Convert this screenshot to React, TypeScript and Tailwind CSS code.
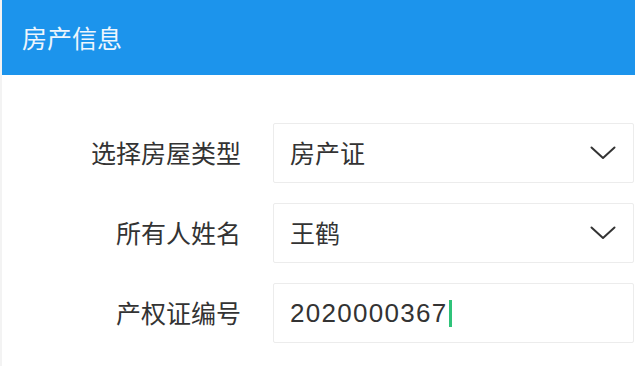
import React from "react";

const Chevron = () => (
  <svg width="26" height="14" viewBox="0 0 26 14" fill="none">
    <path d="M1.5 1.5 L13 12 L24.5 1.5" stroke="#333" strokeWidth="2" strokeLinecap="round" strokeLinejoin="round" />
  </svg>
);

export default function App() {
  const font = { fontFamily: '"Noto Sans CJK SC", "Noto Sans", sans-serif' } as React.CSSProperties;
  return (
    <div className="w-[635px] h-[366px] bg-white border-l-2 border-[#f3f3f3] overflow-hidden" style={font}>
      <div className="h-[75px] bg-[#1c94ec] flex items-center pl-[20px] text-[25px] text-[#eef6fd]">
        房产信息
      </div>
      <div className="pt-[48px] flex flex-col gap-[20px] pr-[1px]">
        <Row label="选择房屋类型">
          <span>房产证</span>
          <Chevron />
        </Row>
        <Row label="所有人姓名">
          <span>王鹤</span>
          <Chevron />
        </Row>
        <Row label="产权证编号">
          <span className="flex items-center">
            <span className="text-[26px] tracking-[1.3px]" style={{ fontFamily: '"Liberation Sans", Arial, sans-serif' }}>2020000367</span>
            <span className="inline-block w-[3px] h-[27px] bg-[#2fc37a] ml-[1px]" />
          </span>
        </Row>
      </div>
    </div>
  );
}

function Row({ label, children }: { label: string; children: React.ReactNode }) {
  return (
    <div className="flex items-center h-[60px]">
      <div className="w-[239px] text-right text-[25px] text-[#333333] shrink-0">{label}</div>
      <div className="ml-[32px] flex-1 h-[60px] border border-[#ececec] rounded-[2px] flex items-center justify-between pl-[16px] pr-[17px] text-[25px] text-[#333333]">
        {children}
      </div>
    </div>
  );
}
